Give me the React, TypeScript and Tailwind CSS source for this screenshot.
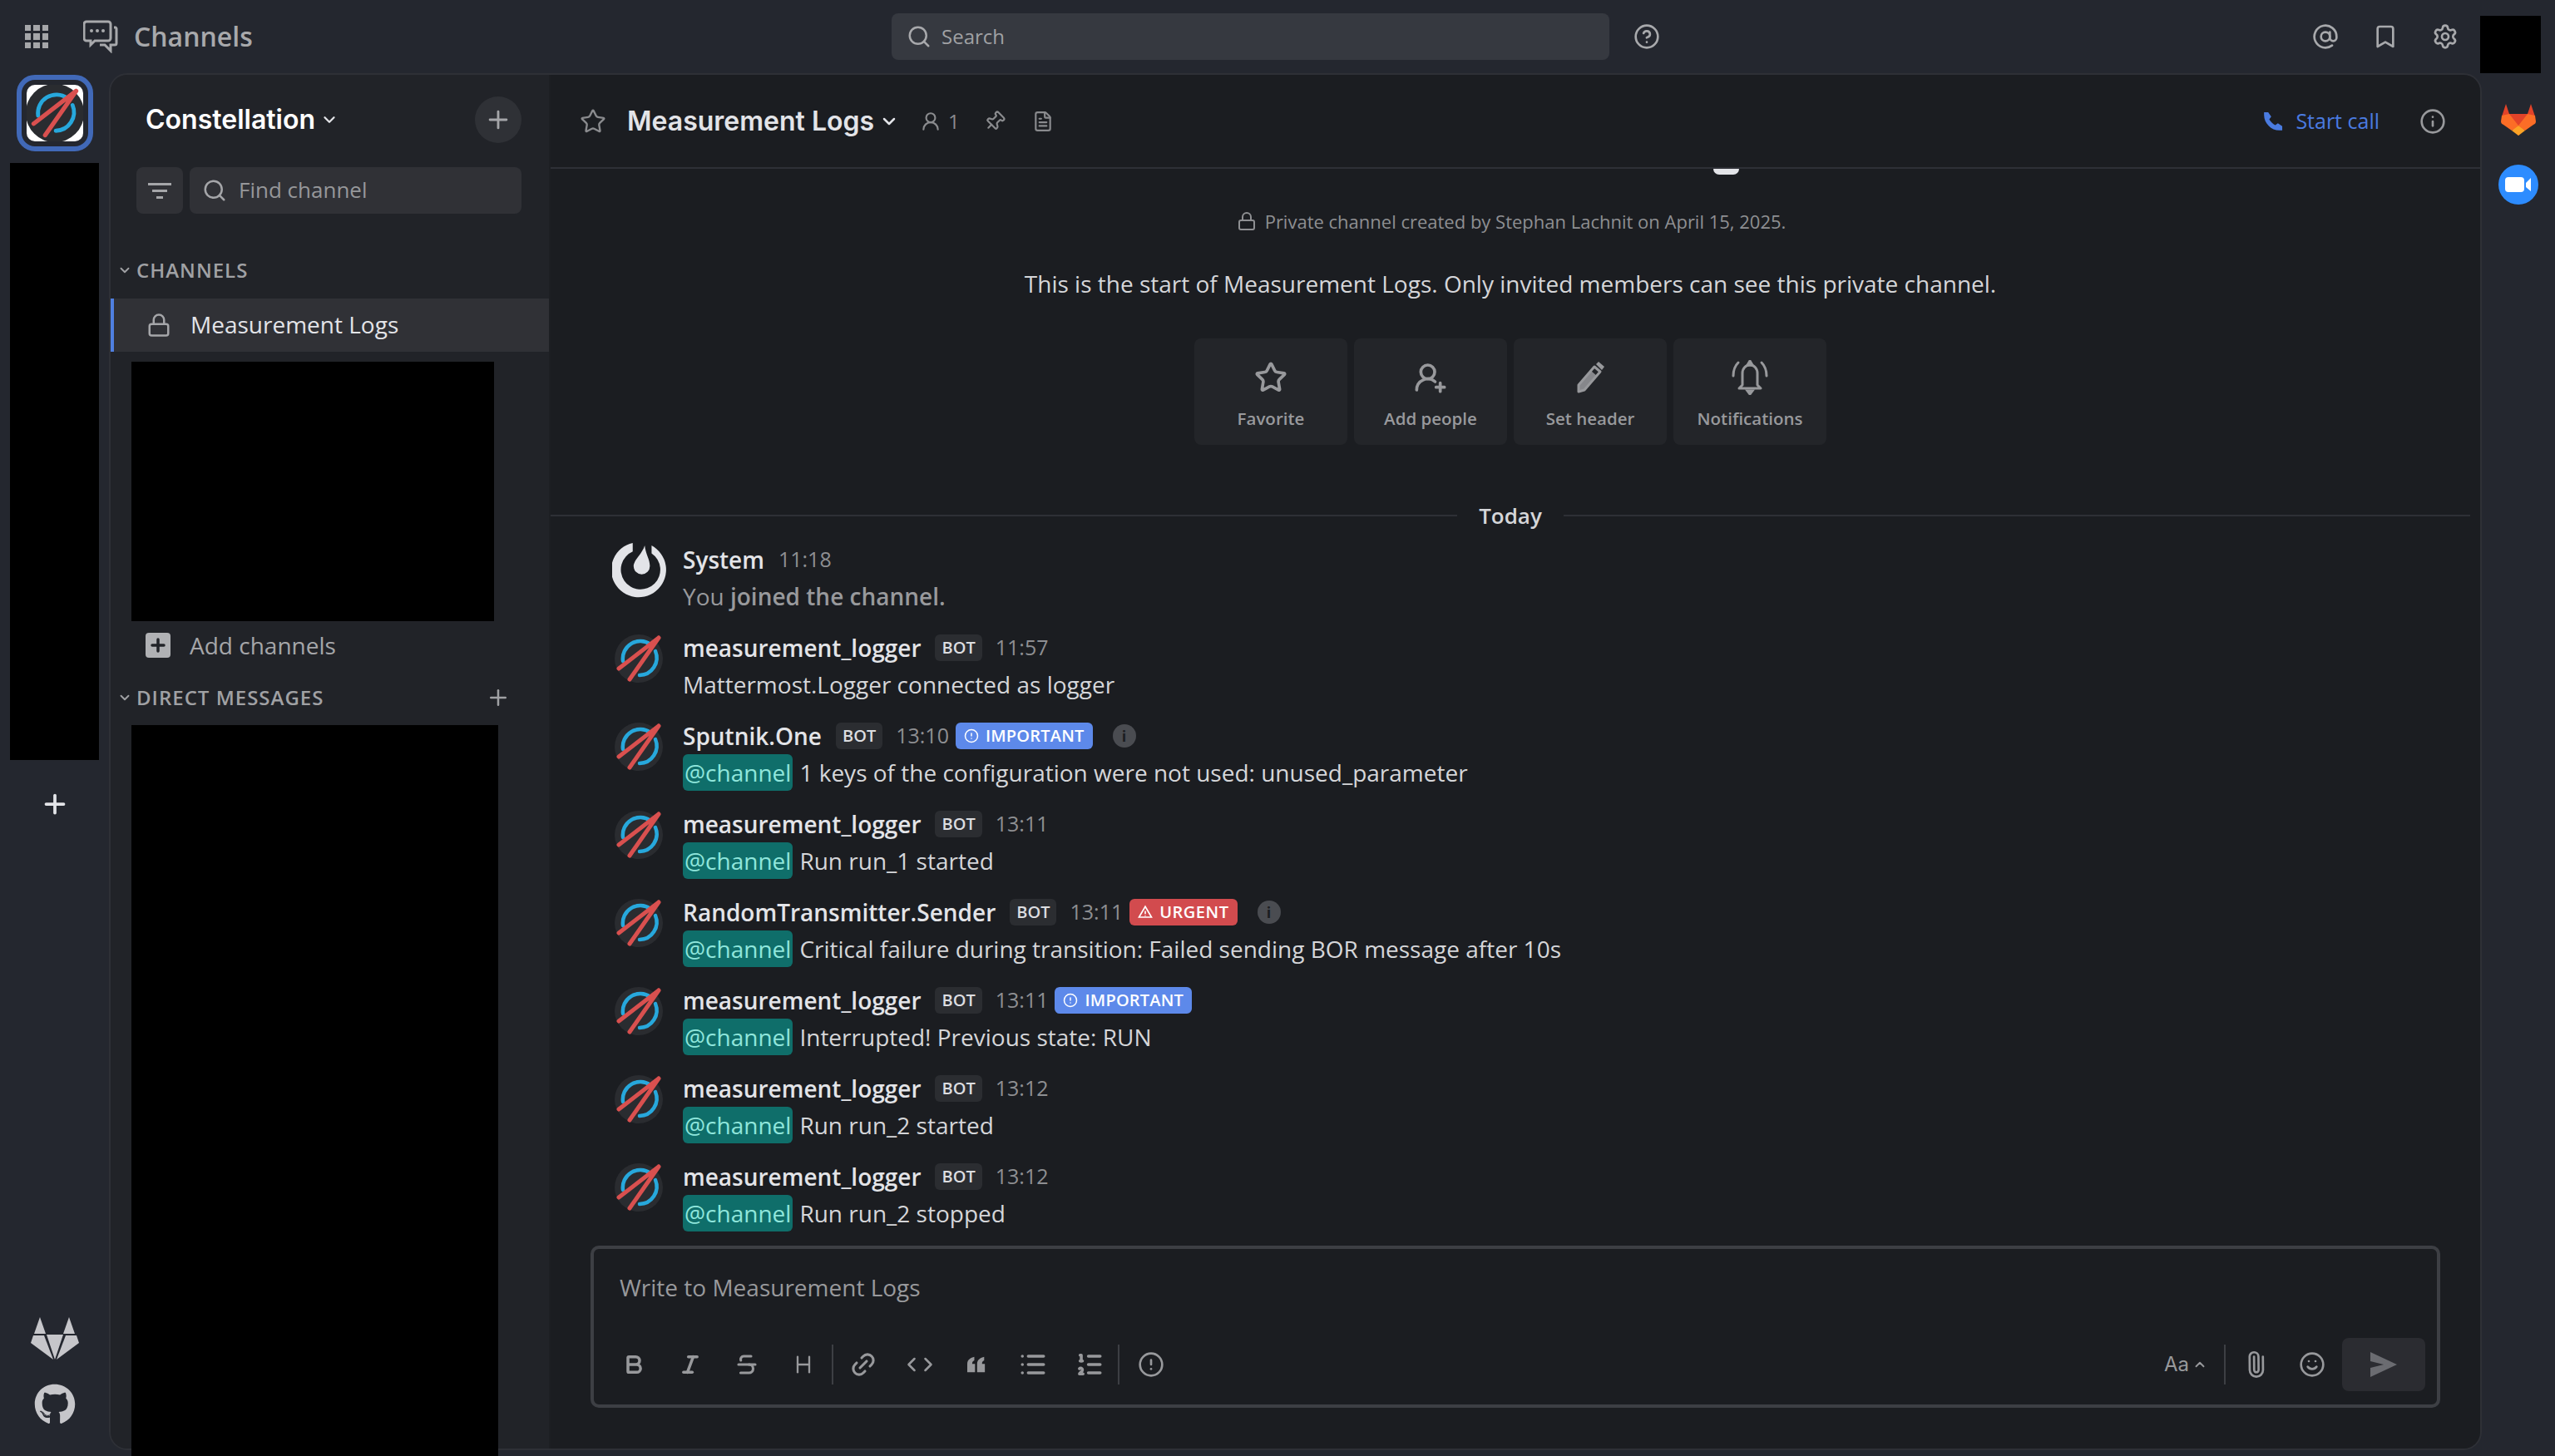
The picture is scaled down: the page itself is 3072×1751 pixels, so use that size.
import React from 'react';
import {
  AtSign,
  Bold,
  Bookmark,
  ChevronDown,
  ChevronLeft,
  ChevronRight,
  ChevronUp,
  CircleAlert,
  CircleHelp,
  FileText,
  Heading,
  Info,
  Italic,
  Link2,
  List,
  ListOrdered,
  Lock,
  Paperclip,
  Pin,
  Plus,
  Search,
  Settings,
  Smile,
  Star,
  Strikethrough,
  UserRound,
  UserRoundPlus,
} from 'lucide-react';
import { FaGithub } from 'react-icons/fa';

function ConstellationLogo({ size, radius = 29 }: { size: number; radius?: number }) {
  return (
    <svg width={size} height={size} viewBox="0 0 64 64" className="shrink-0">
      <circle cx="32" cy="32" r={radius} fill="#2a2c30" />
      <path d="M13 35 A21 21 0 0 1 46 15" fill="none" stroke="#27a8dc" strokeWidth="4.5" strokeLinecap="round" />
      <path d="M52 23 A21 21 0 0 1 33 52" fill="none" stroke="#27a8dc" strokeWidth="4.5" strokeLinecap="round" />
      <path d="M56 7 L8 44 M56 7 L21 57" fill="none" stroke="#d9504f" strokeWidth="5" strokeLinecap="round" />
    </svg>
  );
}

function MattermostLogo() {
  return (
    <svg width="66" height="66" viewBox="0 0 64 64" className="shrink-0">
      <path d="M24 0 A32 32 0 1 0 46 3 L46 12 A23 23 0 1 1 24 10 Z" fill="#e3e4e8" />
      <path d="M38 3 C39 13 44 19 44 27 A9.5 9.5 0 0 1 25 27 C25 20 35 13 38 3 Z" fill="#e3e4e8" />
    </svg>
  );
}

function GitlabMono() {
  return (
    <svg width="58" height="52" viewBox="0 0 58 52" className="shrink-0" fill="#c6c6ca">
      <path d="M11 0 L18 20 L4 20 Z" />
      <path d="M46 0 L53 20 L39 20 Z" />
      <path d="M19 21 L39 21 L29 51 Z" />
      <path d="M3 22 L16 22 L27 51 L0 31 Z" />
      <path d="M55 22 L42 22 L31 51 L58 31 Z" />
    </svg>
  );
}

function GitlabColor() {
  return (
    <svg width="42" height="40" viewBox="0 0 42 40" className="shrink-0">
      <path d="M6 1 L10 13 L32 13 L36 1 L41 16 L21 39 L1 16 Z" fill="#e24329" />
      <path d="M1 15 L0 22 C0 24 1 25 3 26 L13 33 L21 27 L10 13 Z" fill="#fc6d26" />
      <path d="M41 15 L42 22 C42 24 41 25 39 26 L29 33 L21 27 L32 13 Z" fill="#fc6d26" />
      <path d="M13 33 L21 39 L29 33 L21 27 Z" fill="#fca326" />
    </svg>
  );
}

function ZoomIcon() {
  return (
    <div className="flex h-[48px] w-[48px] items-center justify-center rounded-full bg-[#2d8cff]">
      <svg width="32" height="20" viewBox="0 0 32 20" fill="#ffffff">
        <rect x="0" y="1" width="23" height="18" rx="4" />
        <path d="M25 8 L31 2 L31 18 L25 13 Z" />
      </svg>
    </div>
  );
}

function GridIcon() {
  return (
    <div className="grid h-[28px] w-[28px] shrink-0 grid-cols-3 gap-[3px]">
      {Array.from({ length: 9 }).map((_, i) => (
        <span key={i} className="bg-[#a5a6a9]" />
      ))}
    </div>
  );
}

function ChatIcon() {
  return (
    <svg width="42" height="40" viewBox="0 0 42 40" fill="none" stroke="#a8a9ac" strokeWidth="3" className="shrink-0">
      <path d="M4 2 H30 A3 3 0 0 1 33 5 V22 A3 3 0 0 1 30 25 H14 L9 30 V25 H4 A3 3 0 0 1 1 22 V5 A3 3 0 0 1 4 2 Z" />
      <path d="M37 9 H39 A2 2 0 0 1 40 11 V28 A2 2 0 0 1 38 30 H33 V37 L26 30 H20" />
      <circle cx="10" cy="13" r="2" fill="#a8a9ac" stroke="none" />
      <circle cx="17" cy="13" r="2" fill="#a8a9ac" stroke="none" />
      <circle cx="24" cy="13" r="2" fill="#a8a9ac" stroke="none" />
    </svg>
  );
}

function PencilIcon() {
  return (
    <svg width="40" height="40" viewBox="0 0 40 40" fill="none">
      <path d="M6 29 L25 7 L32 13 L13 35 L6 37 Z" stroke="currentColor" strokeWidth="3" strokeLinejoin="round" />
      <path d="M27 4 L30 1 L37 7 L34 11 Z" fill="currentColor" />
      <path d="M21 12 L28 18 L13 35 L6 37 L6 29 Z" fill="currentColor" opacity="0.85" />
    </svg>
  );
}

function AlarmBell() {
  return (
    <svg width="44" height="42" viewBox="0 0 44 42" fill="none" stroke="currentColor" strokeWidth="3">
      <path d="M13 30 V16 C13 10 17 6 22 6 C27 6 31 10 31 16 V30 L35 34 H9 Z" strokeLinejoin="round" />
      <path d="M19 6 L22 1 L25 6 Z" fill="currentColor" />
      <path d="M19 37 H25 L22 41 Z" fill="currentColor" />
      <path d="M2 19 C2 12 4 7 8 3" strokeLinecap="round" />
      <path d="M42 19 C42 12 40 7 36 3" strokeLinecap="round" />
    </svg>
  );
}

function Mention() {
  return (
    <span className="rounded-[6px] bg-[#0f6e6a] px-[2px] py-[1px] text-[#8fe6dc]">@channel</span>
  );
}

type Badge = 'important' | 'urgent';

type Message = {
  name: string;
  time: string;
  text: string;
  mention?: boolean;
  badge?: Badge;
};

const messages: Message[] = [
  { name: 'measurement_logger', time: '11:57', text: 'Mattermost.Logger connected as logger' },
  { name: 'Sputnik.One', time: '13:10', text: '1 keys of the configuration were not used: unused_parameter', mention: true, badge: 'important' },
  { name: 'measurement_logger', time: '13:11', text: 'Run run_1 started', mention: true },
  { name: 'RandomTransmitter.Sender', time: '13:11', text: 'Critical failure during transition: Failed sending BOR message after 10s', mention: true, badge: 'urgent' },
  { name: 'measurement_logger', time: '13:11', text: 'Interrupted! Previous state: RUN', mention: true, badge: 'important' },
  { name: 'measurement_logger', time: '13:12', text: 'Run run_2 started', mention: true },
  { name: 'measurement_logger', time: '13:12', text: 'Run run_2 stopped', mention: true },
];

function PriorityBadge({ kind }: { kind: Badge }) {
  if (kind === 'important') {
    return (
      <span className="ml-[8px] flex h-[32px] items-center gap-[8px] rounded-[6px] bg-[#5d89ea] px-[10px] text-[20px] font-semibold tracking-[0.2px] text-white">
        <CircleAlert size={18} strokeWidth={2} />
        IMPORTANT
      </span>
    );
  }
  return (
    <span className="ml-[8px] flex h-[32px] items-center gap-[8px] rounded-[6px] bg-[#d24b4e] px-[10px] text-[20px] font-semibold tracking-[0.5px] text-white">
      <svg width="18" height="18" viewBox="0 0 24 24" fill="none" stroke="#ffffff" strokeWidth="2.2">
        <path d="M12 3 L22 20 H2 Z" />
        <path d="M12 10 V15 M12 17 V18" />
      </svg>
      URGENT
    </span>
  );
}

function InfoDot() {
  return (
    <span className="ml-[24px] flex h-[28px] w-[28px] items-center justify-center rounded-full bg-[#4a4c51] text-[18px] font-bold text-[#1b1d21]">
      i
    </span>
  );
}

function MessageRow({ message }: { message: Message }) {
  return (
    <div className="flex h-[106px] pl-[74px] pt-[9px]">
      <div className="w-[85px] shrink-0 pt-[3px]">
        <ConstellationLogo size={64} />
      </div>
      <div>
        <div className="flex h-[44px] items-center">
          <span className="text-[28px] font-semibold text-[#e3e4e8]">{message.name}</span>
          <span className="ml-[17px] flex h-[32px] items-center rounded-[6px] bg-[#2b2d31] px-[8px] text-[20px] font-semibold text-[#dcdde0]">BOT</span>
          <span className="ml-[16px] text-[25px] text-[#8e8f92]">{message.time}</span>
          {message.badge && <PriorityBadge kind={message.badge} />}
          {message.badge && message.name !== 'measurement_logger' && <InfoDot />}
        </div>
        <div className="flex h-[44px] items-center text-[28px] text-[#d5d6d9]">
          {message.mention && <Mention />}
          {message.mention && <span className="w-[8px]" />}
          <span>{message.text}</span>
        </div>
      </div>
    </div>
  );
}

const introActions = [
  { label: 'Favorite', icon: <Star size={40} strokeWidth={2.2} /> },
  { label: 'Add people', icon: <UserRoundPlus size={40} strokeWidth={2.2} /> },
  { label: 'Set header', icon: <PencilIcon /> },
  { label: 'Notifications', icon: <AlarmBell /> },
];

function ToolButton({ children }: { children: React.ReactNode }) {
  return <span className="flex w-[68px] shrink-0 items-center justify-center text-[#98999c]">{children}</span>;
}

function Sidebar() {
  return (
    <aside className="w-[529px] shrink-0 rounded-l-[20px] border-r-2 border-[#1d1f23] bg-[#212328]">
      <div className="flex items-center pl-[42px] pr-[33px] pt-[26px]">
        <span className="font-['Inter',sans-serif] text-[32px] font-semibold text-white">Constellation</span>
        <ChevronDown size={22} strokeWidth={2.5} className="ml-[6px] text-[#e3e4e8]" />
        <span className="ml-auto flex h-[56px] w-[56px] items-center justify-center rounded-full bg-[#2f3136] text-[#a5a6a9]">
          <Plus size={34} strokeWidth={2} />
        </span>
      </div>
      <div className="mt-[29px] flex gap-[8px] pl-[31px] pr-[33px]">
        <span className="flex h-[56px] w-[56px] items-center justify-center rounded-[8px] bg-[#303136]">
          <span className="flex flex-col items-center gap-[5px]">
            <span className="h-[3px] w-[28px] bg-[#a5a6a9]" />
            <span className="h-[3px] w-[18px] bg-[#a5a6a9]" />
            <span className="h-[3px] w-[8px] bg-[#a5a6a9]" />
          </span>
        </span>
        <div className="flex h-[56px] flex-1 items-center rounded-[8px] bg-[#303136] pl-[15px] text-[#a5a6a9]">
          <Search size={30} strokeWidth={2} />
          <span className="mb-[2px] ml-[14px] text-[26px] text-[#96979a]">Find channel</span>
        </div>
      </div>
      <div className="mt-[48px] flex h-[40px] items-center pl-[8px] text-[24px] font-semibold tracking-[1px] text-[#a0a1a4]">
        <ChevronDown size={18} strokeWidth={2.5} className="mr-[5px]" />
        CHANNELS
      </div>
      <div className="mt-[14px] flex h-[64px] items-center border-l-4 border-[#4f7fe0] bg-[#303136] pl-[39px] text-[28px] text-[#e3e4e8]">
        <Lock size={30} strokeWidth={2} className="text-[#a5a6a9]" />
        <span className="mb-[2px] ml-[23px]">Measurement Logs</span>
      </div>
      <div className="ml-[25px] mt-[12px] h-[312px] w-[436px] bg-black" />
      <div className="mt-[14px] flex h-[30px] items-center pl-[42px] text-[28px] text-[#a5a6a9]">
        <span className="flex h-[30px] w-[30px] items-center justify-center rounded-[4px] bg-[#b0b1b4] text-[#212328]">
          <Plus size={24} strokeWidth={3.5} />
        </span>
        <span className="ml-[23px]">Add channels</span>
      </div>
      <div className="mt-[28px] flex h-[40px] items-center pl-[8px] pr-[46px] text-[24px] font-semibold tracking-[1px] text-[#a0a1a4]">
        <ChevronDown size={18} strokeWidth={2.5} className="mr-[5px]" />
        DIRECT MESSAGES
        <Plus size={30} strokeWidth={2} className="ml-auto" />
      </div>
      <div className="ml-[25px] mt-[13px] h-[880px] w-[441px] bg-black" />
    </aside>
  );
}

function Composer() {
  return (
    <div className="mx-[48px] mt-[7px] h-[195px] rounded-[10px] border-4 border-[#3d3f44] pl-[14px] pr-[14px]">
      <div className="pl-[17px] pt-[26px] text-[28px] leading-[40px] text-[#98999c]">Write to Measurement Logs</div>
      <div className="mt-[41px] flex h-[64px] items-center">
        <ToolButton><Bold size={28} strokeWidth={3} /></ToolButton>
        <ToolButton><Italic size={28} strokeWidth={3} /></ToolButton>
        <ToolButton><Strikethrough size={30} strokeWidth={2.5} /></ToolButton>
        <ToolButton><Heading size={28} strokeWidth={2} /></ToolButton>
        <span className="h-[48px] w-[2px] bg-[#3d3f44]" />
        <span className="w-[2px]" />
        <ToolButton><Link2 size={34} strokeWidth={2.2} className="-rotate-45" /></ToolButton>
        <ToolButton>
          <ChevronLeft size={28} strokeWidth={2.2} className="-mr-[4px]" />
          <ChevronRight size={28} strokeWidth={2.2} className="-ml-[4px]" />
        </ToolButton>
        <ToolButton>
          <svg width="22" height="20" viewBox="0 0 26 22" fill="currentColor">
            <path d="M0 22 V10 C0 4 5 1 10 0 V5 C8 6 7 7 7 10 H11 V22 Z" />
            <path d="M14 22 V10 C14 4 19 1 24 0 V5 C22 6 21 7 21 10 H25 V22 Z" />
          </svg>
        </ToolButton>
        <ToolButton><List size={34} strokeWidth={2.5} /></ToolButton>
        <ToolButton><ListOrdered size={34} strokeWidth={2.5} /></ToolButton>
        <span className="h-[48px] w-[2px] bg-[#3d3f44]" />
        <span className="w-[4px]" />
        <ToolButton><CircleAlert size={32} strokeWidth={2} /></ToolButton>
        <div className="ml-auto flex items-center text-[#98999c]">
          <span className="font-['Inter',sans-serif] text-[24px]">Aa</span>
          <ChevronUp size={18} strokeWidth={2.5} className="ml-[4px]" />
          <span className="ml-[20px] h-[48px] w-[2px] bg-[#3d3f44]" />
          <Paperclip size={32} strokeWidth={2} className="ml-[20px] -rotate-45" />
          <Smile size={32} strokeWidth={2} className="ml-[36px]" />
          <span className="ml-[20px] flex h-[64px] w-[100px] items-center justify-center rounded-[8px] bg-[#2b2c31]">
            <svg width="32" height="30" viewBox="0 0 32 30" fill="#6b6c71">
              <path d="M0 0 L32 15 L0 30 V19 L16 15 L0 11 Z" />
            </svg>
          </span>
        </div>
      </div>
    </div>
  );
}

function Channel() {
  return (
    <main className="flex min-w-0 flex-1 flex-col rounded-r-[20px] bg-[#1b1d21]">
      <header className="flex h-[113px] shrink-0 items-center border-b-2 border-[#2e3036] pl-[35px] pr-[41px]">
        <Star size={32} strokeWidth={1.8} className="text-[#8a8b8e]" />
        <span className="ml-[25px] font-['Inter',sans-serif] text-[32px] font-semibold text-[#e3e4e8]">Measurement Logs</span>
        <ChevronDown size={24} strokeWidth={2.5} className="ml-[6px] text-[#e3e4e8]" />
        <UserRound size={26} strokeWidth={2} className="ml-[25px] text-[#8a8b8e]" />
        <span className="ml-[8px] text-[24px] text-[#8a8b8e]">1</span>
        <Pin size={26} strokeWidth={2} className="ml-[29px] rotate-45 text-[#8a8b8e]" />
        <FileText size={26} strokeWidth={2} className="ml-[32px] text-[#8a8b8e]" />
        <svg width="26" height="26" viewBox="0 0 24 24" fill="#4a7be0" className="ml-auto">
          <path d="M6.6 1.8 L10 6.6 L7.8 9.6 C9 12 12 15 14.4 16.2 L17.4 14 L22.2 17.4 V22 H19 C10 22 2 14 2 5 V1.8 Z" />
        </svg>
        <span className="ml-[14px] text-[25px] font-medium text-[#4a7be0]">Start call</span>
        <Info size={32} strokeWidth={2} className="ml-[48px] text-[#98999c]" />
      </header>
      <div className="min-h-0 flex-1 overflow-hidden pr-[12px]">
        <div className="relative h-0">
          <div className="absolute left-[1398px] top-0 h-[7px] w-[31px] rounded-b-full bg-[#e3e4e8]" />
        </div>
        <div className="mt-[45px] flex h-[36px] items-center justify-center pl-[2px] text-[22px] text-[#8e8f92]">
          <Lock size={24} strokeWidth={2} className="mr-[10px]" />
          Private channel created by Stephan Lachnit on April 15, 2025.
        </div>
        <div className="mt-[37px] flex h-[40px] items-center justify-center text-[28px] text-[#d5d6d9]">
          This is the start of Measurement Logs. Only invited members can see this private channel.
        </div>
        <div className="mt-[46px] flex justify-center gap-[8px]">
          {introActions.map((action) => (
            <div key={action.label} className="flex h-[128px] w-[184px] flex-col items-center rounded-[8px] bg-[#232529] text-[#98999c]">
              <span className="mt-[26px] flex h-[42px] items-center justify-center">{action.icon}</span>
              <span className="mt-[13px] text-[20.5px] font-semibold">{action.label}</span>
            </div>
          ))}
        </div>
        <div className="mt-[65px] flex h-[40px] items-center">
          <span className="h-[2px] flex-1 bg-[#2e3036]" />
          <span className="px-[26px] text-[26px] font-semibold text-[#d5d6d9]">Today</span>
          <span className="h-[2px] flex-1 bg-[#2e3036]" />
        </div>
        <div className="mt-[2px]">
          <div className="flex h-[106px] pl-[74px] pt-[9px]">
            <div className="w-[85px] shrink-0 pt-[2px]">
              <MattermostLogo />
            </div>
            <div>
              <div className="flex h-[44px] items-center">
                <span className="text-[28px] font-semibold text-[#e3e4e8]">System</span>
                <span className="ml-[17px] text-[25px] text-[#8e8f92]">11:18</span>
              </div>
              <div className="flex h-[44px] items-center text-[28px] text-[#98999c]">
                You&nbsp;<span className="font-semibold">joined the channel.</span>
              </div>
            </div>
          </div>
          {messages.map((message, i) => (
            <MessageRow key={i} message={message} />
          ))}
        </div>
      </div>
      <Composer />
      <div className="h-[49px] shrink-0" />
    </main>
  );
}

export default function App() {
  return (
    <div className="flex h-[1751px] w-[3072px] flex-col overflow-hidden bg-[#24272f] font-['Open_Sans',sans-serif]">
      <header className="flex h-[88px] shrink-0 items-center">
        <div className="flex w-[1072px] shrink-0 items-center pl-[30px]">
          <GridIcon />
          <span className="ml-[42px]"><ChatIcon /></span>
          <span className="ml-[19px] text-[32px] font-semibold text-[#a8a9ac]">Channels</span>
        </div>
        <div className="flex h-[56px] w-[863px] shrink-0 items-center rounded-[8px] bg-[#363940] pl-[18px] text-[#a8a9ac]">
          <Search size={30} strokeWidth={2} />
          <span className="ml-[12px] text-[24px] text-[#a0a1a4]">Search</span>
        </div>
        <CircleHelp size={32} strokeWidth={2} className="ml-[29px] text-[#a8a9ac]" />
        <AtSign size={32} strokeWidth={2} className="ml-auto text-[#a8a9ac]" />
        <Bookmark size={32} strokeWidth={2} className="ml-[40px] text-[#a8a9ac]" />
        <Settings size={32} strokeWidth={2} className="ml-[40px] text-[#a8a9ac]" />
        <div className="ml-[26px] mr-[17px] h-[69px] w-[73px] self-end bg-black" />
      </header>
      <div className="flex min-h-0 flex-1">
        <nav className="flex w-[131px] shrink-0 flex-col items-center">
          <div className="mt-[2px] flex h-[92px] w-[92px] items-center justify-center rounded-[22px] border-[6px] border-[#4169b8]">
            <div className="flex h-[68px] w-[68px] items-center justify-center rounded-[10px] bg-white">
              <ConstellationLogo size={68} radius={33} />
            </div>
          </div>
          <div className="mt-[14px] h-[718px] w-[107px] bg-black" />
          <Plus size={36} strokeWidth={2.5} className="mt-[35px] text-[#e3e4e8]" />
          <div className="mt-auto"><GitlabMono /></div>
          <div className="mb-[37px] mt-[28px] text-[#c6c6ca]"><FaGithub size={50} /></div>
        </nav>
        <div className="mb-[7px] flex min-w-0 flex-1 rounded-[22px] border-2 border-[#2e3036]">
          <Sidebar />
          <Channel />
        </div>
        <aside className="flex w-[88px] shrink-0 flex-col items-center">
          <div className="mt-[36px]"><GitlabColor /></div>
          <div className="mt-[34px]"><ZoomIcon /></div>
        </aside>
      </div>
    </div>
  );
}
